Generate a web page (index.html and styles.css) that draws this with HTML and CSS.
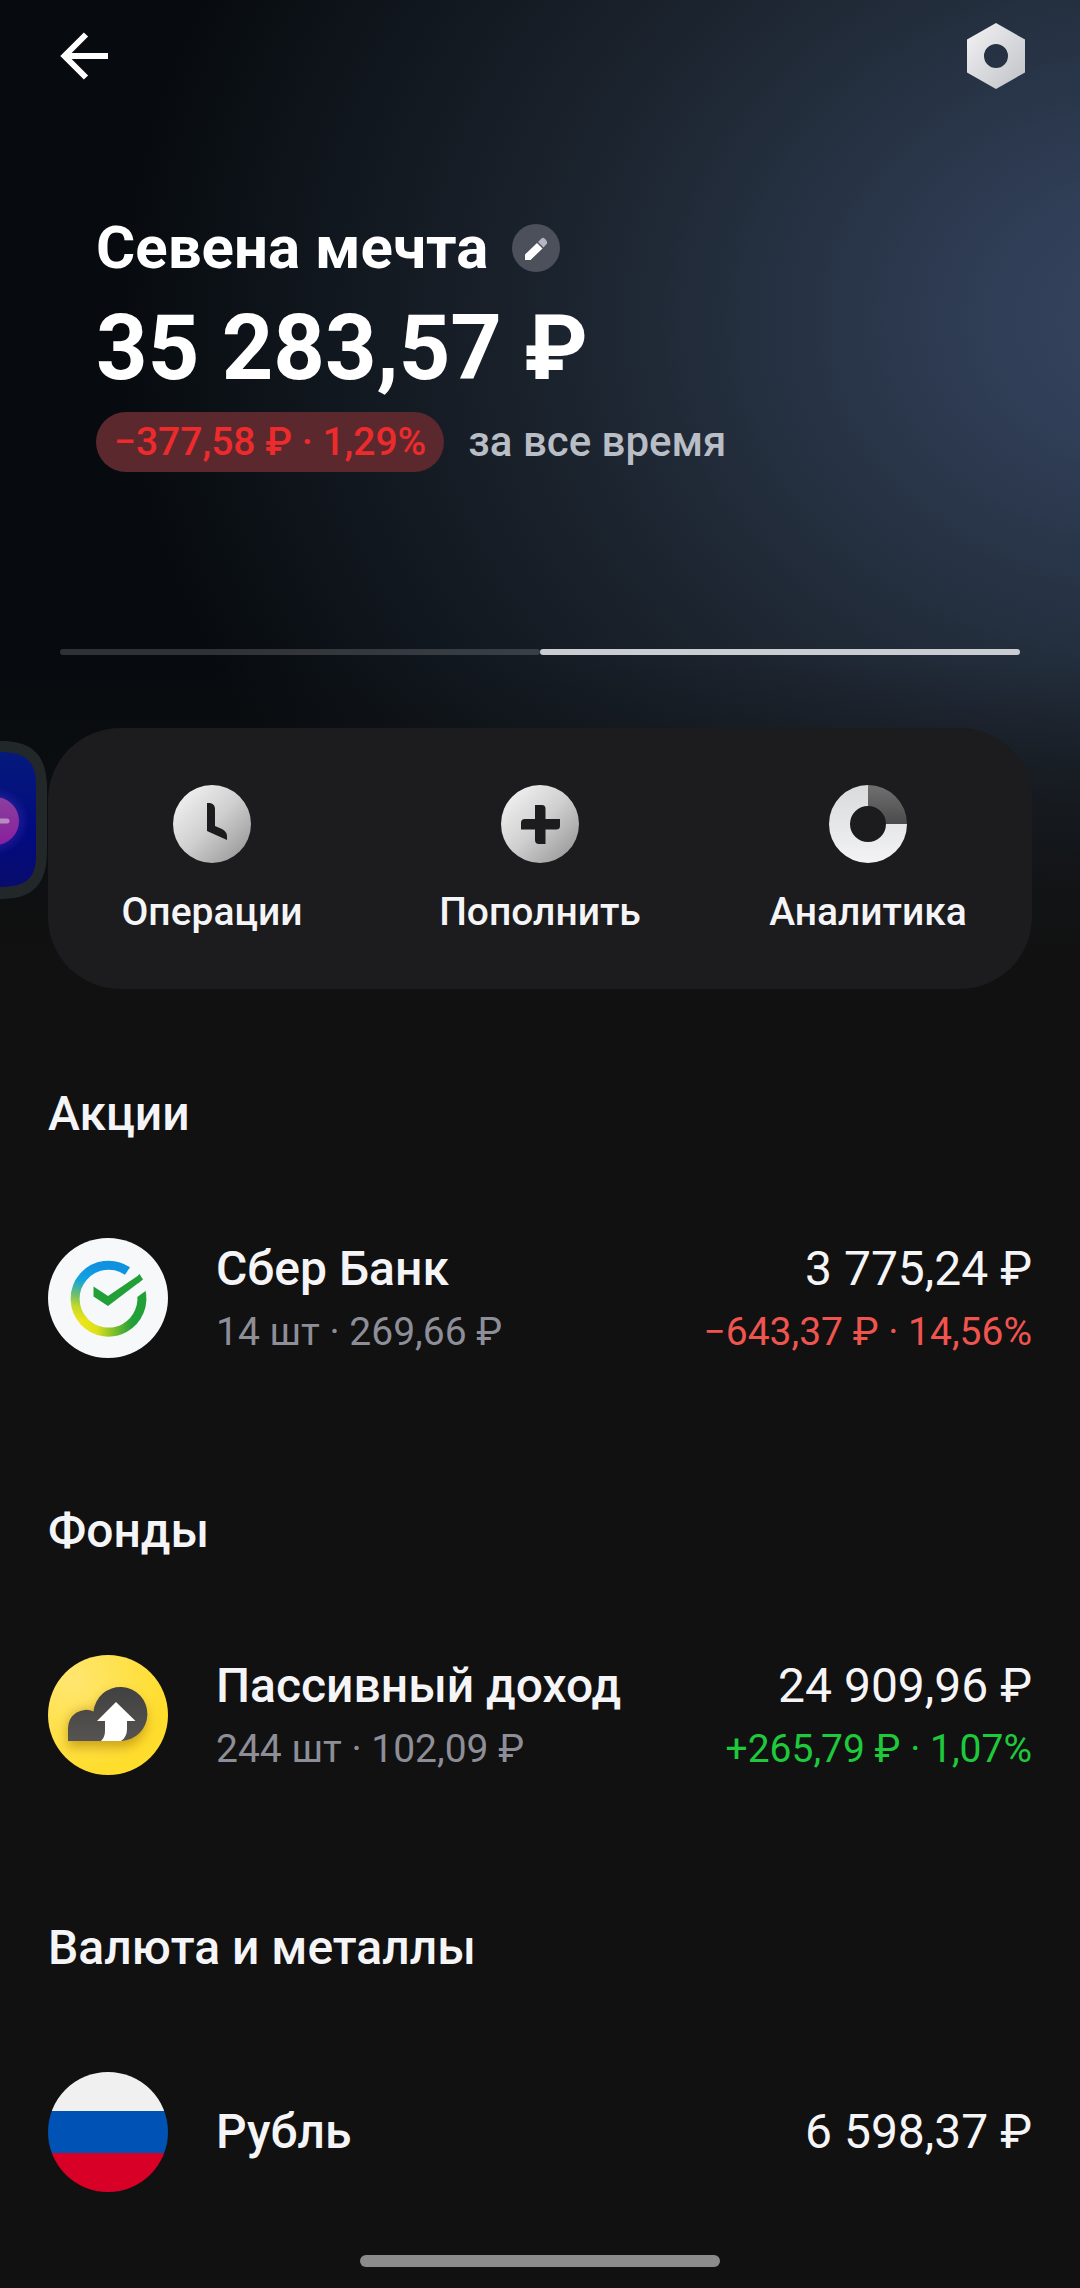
FILE: index.html
```html
<!DOCTYPE html>
<html lang="ru">
<head>
<meta charset="utf-8">
<meta name="viewport" content="width=device-width, initial-scale=1">
<title>Севена мечта</title>
<link rel="stylesheet" href="styles.css">
</head>
<body>
<main class="screen">
  <nav class="topbar">
    <button class="icon-button" type="button" aria-label="Назад">
      <svg width="48" height="48" viewBox="0 0 48 48" fill="none" stroke="#fff" stroke-width="6"><path d="M26 2.500 4.500 24 26 45.500M5 24h43"/></svg>
    </button>
    <button class="icon-button" type="button" aria-label="Настройки">
      <svg width="58" height="66" viewBox="0 0 58 66">
        <defs><linearGradient id="nut" x1="0" y1="0" x2="1" y2="1"><stop offset="0" stop-color="#f4f4f5"/><stop offset=".5" stop-color="#d9dade"/><stop offset="1" stop-color="#c0c2c6"/></linearGradient></defs>
        <path fill="url(#nut)" fill-rule="evenodd" d="M29 0 58 16.500v33L29 66 0 49.500v-33zM29 21a12 12 0 1 0 0 24 12 12 0 0 0 0-24z"/>
      </svg>
    </button>
  </nav>

  <header class="summary">
    <div class="title-row">
      <h1 class="title">Севена мечта</h1>
      <button class="edit" type="button" aria-label="Изменить название">
        <svg width="48" height="48" viewBox="0 0 48 48">
          <path fill="#fff" d="M13 36v-5.500L25 19l5.500 5.500L18.500 36z"/>
          <path fill="#b5b6bf" d="m26 18 3.500-3.500q1.500-1.500 3 0l1.500 1.500q1.500 1.500 1 3.500L31.500 23.500z"/>
        </svg>
      </button>
    </div>
    <p class="amount">35 283,57 ₽</p>
    <div class="change-row">
      <span class="pill">−377,58 ₽ · 1,29%</span>
      <span class="period">за все время</span>
    </div>
  </header>

  <div class="pager"><span class="page"></span><span class="page page-active"></span></div>

  <div class="actions">
    <button class="action" type="button">
      <svg width="78" height="78" viewBox="0 0 78 78">
        <defs><linearGradient id="silver" x1="0" y1="0" x2="1" y2="1"><stop offset=".15" stop-color="#ececed"/><stop offset=".5" stop-color="#cfcfd0"/><stop offset=".85" stop-color="#a2a2a3"/></linearGradient></defs>
        <circle cx="39" cy="39" r="39" fill="url(#silver)"/>
        <path fill="#1c1c1e" d="M34 18h3q5 1 5 6v17l7 3q5 3 5 7v4L34 46z"/>
      </svg>
      <span>Операции</span>
    </button>
    <button class="action" type="button">
      <svg width="78" height="78" viewBox="0 0 78 78">
        <circle cx="39" cy="39" r="39" fill="url(#silver)"/>
        <path fill="#1c1c1e" d="M34 20h7q3.500 0 3.500 4v10H59v7q0 3.500-4 3.500H44.500V59H38q-4 0-4-4V44.500H20V38q0-4 4-4h10z"/>
      </svg>
      <span>Пополнить</span>
    </button>
    <button class="action" type="button">
      <svg width="78" height="78" viewBox="0 0 78 78">
        <defs>
          <linearGradient id="ring" x1="0" y1="0" x2="0" y2="1"><stop offset="0" stop-color="#d8dadb"/><stop offset="1" stop-color="#f3f3f5"/></linearGradient>
          <linearGradient id="slice" x1="0" y1="0" x2="0" y2="1"><stop offset="0" stop-color="#707071"/><stop offset="1" stop-color="#4b4b4c"/></linearGradient>
        </defs>
        <path fill="url(#ring)" d="M39 0a39 39 0 1 0 39 39H57A18 18 0 1 1 39 21z"/>
        <path fill="url(#slice)" d="M39 0a39 39 0 0 1 39 39H57A18 18 0 0 0 39 21z"/>
      </svg>
      <span>Аналитика</span>
    </button>
  </div>

  <section class="group">
    <h2 class="group-title">Акции</h2>
    <a class="asset" href="#sber">
      <svg class="logo" viewBox="0 0 120 120">
        <defs>
          <linearGradient id="sberLeft" gradientUnits="userSpaceOnUse" x1="45" y1="28" x2="32" y2="82"><stop offset="0" stop-color="#0f93e0"/><stop offset=".3" stop-color="#12a5df"/><stop offset=".58" stop-color="#6fc069"/><stop offset=".78" stop-color="#c3d82c"/><stop offset="1" stop-color="#ece51a"/></linearGradient>
          <linearGradient id="sberRight" gradientUnits="userSpaceOnUse" x1="34" y1="0" x2="84" y2="0"><stop offset="0" stop-color="#ece51a"/><stop offset=".3" stop-color="#dde01c"/><stop offset=".65" stop-color="#7cbd2c"/><stop offset="1" stop-color="#21a038"/></linearGradient>
        </defs>
        <circle cx="60" cy="60" r="60" fill="#f7f8fa"/>
        <path fill="none" stroke="url(#sberRight)" stroke-width="9" d="M35.500 83A33.500 33.500 0 0 0 92.500 51"/>
        <path fill="none" stroke="url(#sberLeft)" stroke-width="9" d="M79.500 33A33.500 33.500 0 0 0 36.300 83.700"/>
        <path fill="#f7f8fa" d="M83 63.500 101 50.500V42H83z"/>
        <path fill="#21a038" d="M45.500 48.500 60 58 91 37v7.500L60 68 45.500 58.500z"/>
        <path fill="#21a038" d="m90 37.500 1.500-1.500 3.500 5.500-5 4z"/>
      </svg>
      <span class="col">
        <span class="name">Сбер Банк</span>
        <span class="detail">14 шт · 269,66 ₽</span>
      </span>
      <span class="col col-end">
        <span class="value">3 775,24 ₽</span>
        <span class="detail loss">−643,37 ₽ · 14,56%</span>
      </span>
    </a>
  </section>

  <section class="group">
    <h2 class="group-title">Фонды</h2>
    <a class="asset" href="#passive">
      <svg class="logo" viewBox="0 0 120 120">
        <defs>
          <radialGradient id="gold" cx=".2" cy=".2" r=".8"><stop offset="0" stop-color="#ffe671"/><stop offset="1" stop-color="#ffdd2d"/></radialGradient>
          <linearGradient id="cloud" x1="0" y1="0" x2="0" y2="1"><stop offset="0" stop-color="#414141"/><stop offset="1" stop-color="#565452"/></linearGradient>
          <filter id="soft" x="-30%" y="-30%" width="160%" height="170%"><feGaussianBlur stdDeviation="6"/></filter>
          <clipPath id="disc"><circle cx="60" cy="60" r="60"/></clipPath>
        </defs>
        <circle cx="60" cy="60" r="60" fill="url(#gold)"/>
        <g clip-path="url(#disc)"><path filter="url(#soft)" fill="#a87a00" opacity=".6" d="M20 92V73a18 18 0 0 1 26-16 27 27 0 1 1 30 35z"/></g>
        <path fill="url(#cloud)" d="M20 86V73a18 18 0 0 1 25.500-16.500A27 27 0 1 1 73 86z"/>
        <path fill="#fff" d="M68 47 87.500 66H79v8q0 8-6 12H53q4-4 4-10V66h-8z"/>
      </svg>
      <span class="col">
        <span class="name">Пассивный доход</span>
        <span class="detail">244 шт · 102,09 ₽</span>
      </span>
      <span class="col col-end">
        <span class="value">24 909,96 ₽</span>
        <span class="detail gain">+265,79 ₽ · 1,07%</span>
      </span>
    </a>
  </section>

  <section class="group">
    <h2 class="group-title">Валюта и металлы</h2>
    <a class="asset" href="#rub">
      <svg class="logo" viewBox="0 0 120 120">
        <defs><clipPath id="coin"><circle cx="60" cy="60" r="60"/></clipPath></defs>
        <g clip-path="url(#coin)"><path fill="#f0f0f0" d="M0 0h120v39H0z"/><path fill="#0052b4" d="M0 39h120v42H0z"/><path fill="#d80027" d="M0 81h120v39H0z"/></g>
      </svg>
      <span class="col"><span class="name">Рубль</span></span>
      <span class="col col-end"><span class="value">6 598,37 ₽</span></span>
    </a>
  </section>

  <div class="home-indicator"></div>

  <div class="edge-panel">
    <svg width="48" height="160" viewBox="0 0 48 160">
      <defs>
        <linearGradient id="blue" x1="0" y1="0" x2="0" y2="1"><stop offset="0" stop-color="#051a7c"/><stop offset=".6" stop-color="#020a80"/><stop offset="1" stop-color="#080c6c"/></linearGradient>
        <linearGradient id="purple" x1="0" y1="0" x2="0" y2="1"><stop offset="0" stop-color="#8b3f9e"/><stop offset="1" stop-color="#8a1f9e"/></linearGradient>
        <radialGradient id="glow"><stop offset=".6" stop-color="#5030c0" stop-opacity=".4"/><stop offset="1" stop-color="#5030c0" stop-opacity="0"/></radialGradient>
      </defs>
      <path fill="#22282a" d="M0 1C34 1 47 16 47 50v60c0 34-13 49-47 49z"/>
      <path fill="url(#blue)" d="M0 12c25 0 36 9 36 32v72c0 23-11 31-36 31z"/>
      <circle cx="-5" cy="81" r="34" fill="url(#glow)"/>
      <circle cx="-5" cy="81" r="24" fill="url(#purple)"/>
      <path stroke="#b58bc0" stroke-width="5" stroke-linecap="round" d="M-6 81H7"/>
    </svg>
  </div>
</main>
</body>
</html>
```
FILE: styles.css
```css
* {
  box-sizing: border-box;
}

body {
  margin: 0;
  background: #111;
  color: #f5f5f7;
  font-family: Roboto, "Noto Sans", sans-serif;
}

h1,
h2,
p {
  margin: 0;
}

button {
  padding: 0;
  border: 0;
  background: none;
  color: inherit;
  font: inherit;
  cursor: pointer;
}

svg {
  display: block;
  flex: none;
}

.screen {
  position: relative;
  display: flex;
  flex-direction: column;
  min-height: 100vh;
  background:
    linear-gradient(#11111100 660px, #111 960px) no-repeat,
    radial-gradient(ellipse 1120px 880px at 108% 320px, #36445f 0, #303e57 15%, #263243 34%, #1c242f 53%, #11171e 75%, #070b0f 94%) no-repeat,
    #111;
}

.topbar {
  display: flex;
  align-items: center;
  justify-content: space-between;
  height: 112px;
  padding: 0 55px 0 60px;
}

.summary {
  padding: 100px 96px 0;
}

.title-row {
  display: flex;
  align-items: center;
  gap: 24px;
}

.title {
  color: #fff;
  font-size: 60px;
  font-weight: 700;
  line-height: 72px;
}

.edit {
  border-radius: 50%;
  background: #4b505b;
}

.amount {
  margin-top: 13px;
  color: #fff;
  font-size: 90px;
  font-weight: 700;
  line-height: 104px;
}

.change-row {
  display: flex;
  align-items: center;
  gap: 24px;
  margin-top: 11px;
  font-size: 39px;
  font-weight: 500;
  line-height: 60px;
}

.pill {
  padding: 0 18px;
  border-radius: 30px;
  background: #5b282e;
  color: #ee2b2c;
}

.period {
  color: #b9bdc5;
  font-size: 42px;
}

.pager {
  display: flex;
  height: 6px;
  margin: 177px 60px 0;
}

.page {
  flex: 1;
  border-radius: 3px;
  background: #ffffff29;
}

.page-active {
  background: #c9cdd2;
}

.actions {
  display: grid;
  grid-template-columns: repeat(3, 1fr);
  margin: 73px 48px 0;
  padding: 57px 0 53px;
  border-radius: 72px;
  background: #1c1c1e;
}

.action {
  display: flex;
  flex-direction: column;
  align-items: center;
  gap: 25px;
  font-size: 39px;
  font-weight: 500;
  line-height: 48px;
}

.group {
  margin-top: 141px;
  padding: 0 48px;
}

.actions + .group {
  margin-top: 97px;
}

.group-title {
  font-size: 48px;
  font-weight: 500;
  line-height: 56px;
}

.asset {
  display: flex;
  align-items: center;
  gap: 48px;
  min-height: 128px;
  margin-top: 92px;
  color: inherit;
  text-decoration: none;
}

.logo {
  width: 120px;
  height: 120px;
}

.col {
  display: flex;
  flex-direction: column;
}

.col-end {
  margin-left: auto;
  text-align: right;
}

.name,
.value {
  font-size: 48px;
  line-height: 68px;
}

.name {
  font-weight: 500;
}

.detail {
  color: #8e8e98;
  font-size: 39px;
  line-height: 58px;
}

.loss {
  color: #f0544f;
}

.gain {
  color: #1fc93c;
}

.home-indicator {
  align-self: center;
  width: 33.333%;
  height: 12px;
  margin-top: auto;
  margin-bottom: 21px;
  border-radius: 6px;
  background: #8b8b8b;
}

/* Handle of the system side panel, over the page's left edge */
.edge-panel {
  position: absolute;
  top: 740px;
  left: 0;
}
```
